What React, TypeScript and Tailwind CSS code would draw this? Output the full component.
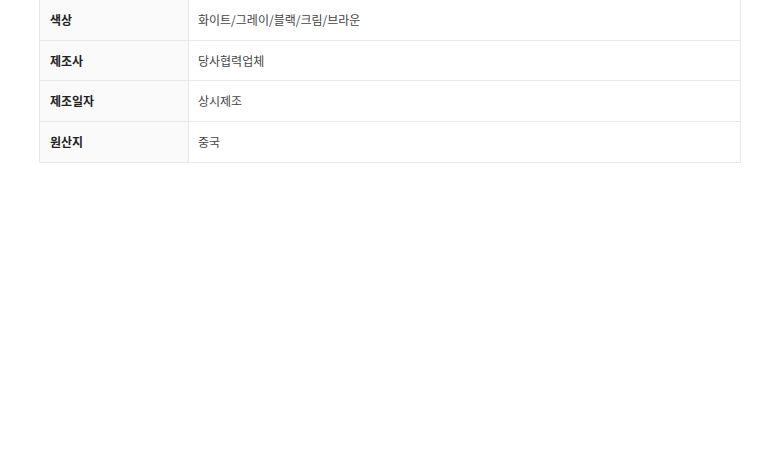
const rows = [
  { label: '색상', value: '화이트/그레이/블랙/크림/브라운' },
  { label: '제조사', value: '당사협력업체' },
  { label: '제조일자', value: '상시제조' },
  { label: '원산지', value: '중국' },
]

export default function App() {
  return (
    <div className="min-h-[465px] w-[780px] bg-white font-['Noto_Sans_CJK_KR','Noto_Sans',sans-serif]">
      <div className="-mt-px pl-[39px] pr-[39px]">
        <table className="w-full border-collapse border border-[#e4e4e4] text-[12px]">
          <tbody>
            {rows.map((row) => (
              <tr key={row.label} className="h-[40.7px]">
                <th className="w-[149px] border border-[#e8e8e8] bg-[#fafafa] pl-[10px] text-left font-bold text-[#222]">
                  {row.label}
                </th>
                <td className="border border-[#e8e8e8] pl-[9px] text-[#444]">{row.value}</td>
              </tr>
            ))}
          </tbody>
        </table>
      </div>
    </div>
  )
}
